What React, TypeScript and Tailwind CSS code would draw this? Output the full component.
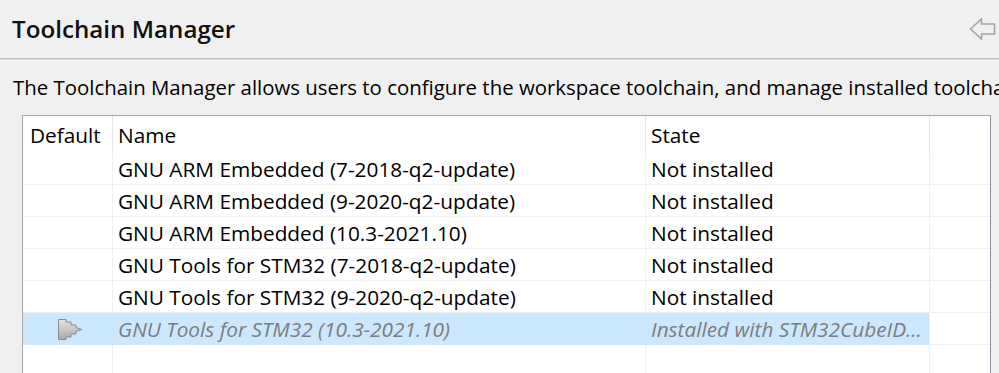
import React from 'react';

const rows = [
  { name: 'GNU ARM Embedded (7-2018-q2-update)', state: 'Not installed' },
  { name: 'GNU ARM Embedded (9-2020-q2-update)', state: 'Not installed' },
  { name: 'GNU ARM Embedded (10.3-2021.10)', state: 'Not installed' },
  { name: 'GNU Tools for STM32 (7-2018-q2-update)', state: 'Not installed' },
  { name: 'GNU Tools for STM32 (9-2020-q2-update)', state: 'Not installed' },
];

function BackArrow() {
  return (
    <svg width="27" height="22" viewBox="0 0 27 22" className="shrink-0">
      <polygon
        points="1.5,11 12.5,1 12.5,6 25.5,6 25.5,16 12.5,16 12.5,21"
        fill="none"
        stroke="#a3a3a3"
        strokeWidth="1.6"
        strokeLinejoin="miter"
      />
    </svg>
  );
}

function DefaultMarker() {
  return (
    <svg width="25" height="21" viewBox="0 0 25 21">
      <defs>
        <linearGradient id="mk" x1="0" y1="0" x2="0" y2="1">
          <stop offset="0" stopColor="#e6e6e6" />
          <stop offset="1" stopColor="#a8a8a8" />
        </linearGradient>
      </defs>
      <polygon
        points="0.5,0.5 8,0.5 8,3 13,3 13,6 18,6 18,8.5 24,10.5 18,12.5 18,15 13,15 13,18 8,18 8,20.5 0.5,20.5"
        fill="url(#mk)"
        stroke="#8a8a8a"
        strokeWidth="1"
      />
    </svg>
  );
}

export default function App() {
  return (
    <div className="h-[373px] w-[999px] overflow-hidden bg-[#f0f0f0] font-['Open_Sans',sans-serif] text-black">
      {/* Title bar */}
      <div className="flex h-[58px] items-center justify-between pl-[12px] pr-[3px]">
        <h1 className="text-[24.2px] font-semibold leading-none text-[#111]">Toolchain Manager</h1>
        <BackArrow />
      </div>
      <div className="h-px bg-[#bdbdbd]" />
      <div className="h-px bg-[#dcdcdc]" />

      {/* Description, clipped by the window edge like the original */}
      <div className="flex h-[55px] items-center overflow-hidden whitespace-nowrap pl-[13px] text-[20.4px] leading-none">
        The Toolchain Manager allows users to configure the workspace toolchain, and manage installed toolchains.
      </div>

      {/* Table */}
      <div className="ml-[22px] w-[969px] border-l border-t border-r border-l-[#a8a8a8] border-t-[#a8a8a8] border-r-[#8c8c9a] bg-white text-[20.8px]">
        <div className="grid h-[37px] grid-cols-[90px_533px_284px_1fr] items-stretch">
          <div className="flex items-center border-r border-[#e6e6e6] pl-[7px] pt-[3px]">Default</div>
          <div className="flex items-center border-r border-[#e6e6e6] pl-[5px] pt-[3px]">Name</div>
          <div className="flex items-center border-r border-[#e6e6e6] pl-[5px] pt-[3px]">State</div>
          <div />
        </div>

        {rows.map((r) => (
          <div key={r.name} className="grid h-[32px] grid-cols-[90px_533px_284px_1fr] border-b border-[#f0f0f0]">
            <div className="border-r border-[#f0f0f0]" />
            <div className="flex items-center whitespace-nowrap border-r border-[#f0f0f0] pl-[5px] pt-[1px]">{r.name}</div>
            <div className="flex items-center whitespace-nowrap border-r border-[#f0f0f0] pl-[5px] pt-[1px]">{r.state}</div>
            <div />
          </div>
        ))}

        <div className="grid h-[32px] grid-cols-[90px_533px_284px_1fr] border-b border-[#f0f0f0] italic text-[#7d7d7d]">
          <div className="flex items-center bg-[#cce8ff] pl-[35px] pt-[1px]">
            <DefaultMarker />
          </div>
          <div className="flex items-center whitespace-nowrap bg-[#cce8ff] pl-[5px] pt-[1px]">GNU Tools for STM32 (10.3-2021.10)</div>
          <div className="flex items-center overflow-hidden whitespace-nowrap border-r border-[#f0f0f0] bg-[#cce8ff] pl-[5px] pt-[1px]">Installed with STM32CubeID...</div>
          <div />
        </div>

        <div className="grid h-[40px] grid-cols-[90px_533px_284px_1fr]">
          <div className="border-r border-[#f0f0f0]" />
          <div className="border-r border-[#f0f0f0]" />
          <div className="border-r border-[#f0f0f0]" />
          <div />
        </div>
      </div>
    </div>
  );
}
